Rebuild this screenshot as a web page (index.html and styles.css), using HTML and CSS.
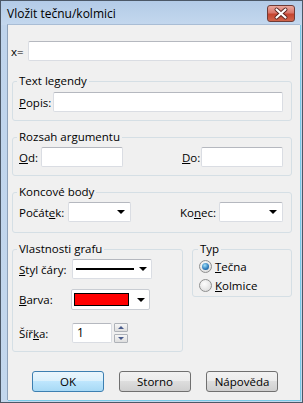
FILE: index.html
```html
<!DOCTYPE html>
<html>
	<head>
		<meta charset="UTF-8">
		<title>Vložit tečnu/kolmici</title>
		<link rel="stylesheet" href="styles.css">
	</head>
	<body>
		<div class="window">
			<div class="titlebar">
				<span class="title">Vložit tečnu/kolmici</span>
				<div class="close">
					<svg width="28" height="17" viewBox="0 0 28 17">
						<path d="M9.5 4.5 L18.5 12.5 M18.5 4.5 L9.5 12.5" stroke="#5a2620" stroke-width="4" stroke-linecap="round"/>
						<path d="M9.5 4.5 L18.5 12.5 M18.5 4.5 L9.5 12.5" stroke="#fff" stroke-width="2.2" stroke-linecap="round"/>
					</svg>
				</div>
			</div>
			<div class="client">
				<div class="xrow">
					<label class="xlab">x=</label>
					<div class="edit grow"></div>
				</div>

				<fieldset class="group">
					<legend>Text legendy</legend>
					<div class="row">
						<label class="l-popis"><u>P</u>opis:</label>
						<div class="edit grow"></div>
					</div>
				</fieldset>

				<fieldset class="group">
					<legend>Rozsah argumentu</legend>
					<div class="row split">
						<div class="pair">
							<label class="l-od"><u>O</u>d:</label>
							<div class="edit w82"></div>
						</div>
						<div class="pair">
							<label class="l-do"><u>D</u>o:</label>
							<div class="edit w82"></div>
						</div>
					</div>
				</fieldset>

				<fieldset class="group g-ends">
					<legend>Koncové body</legend>
					<div class="row split">
						<div class="pair">
							<label class="l-pocatek">Počát<u>e</u>k:</label>
							<div class="combo w63"><span class="arrow"></span></div>
						</div>
						<div class="pair">
							<label class="l-konec">Ko<u>n</u>ec:</label>
							<div class="combo w64"><span class="arrow"></span></div>
						</div>
					</div>
				</fieldset>

				<div class="bottom">
					<fieldset class="group g-graf">
						<legend>Vlastnosti grafu</legend>
						<div class="prop p-styl">
							<label class="plab"><u>S</u>tyl čáry:</label>
							<div class="combo c-styl"><span class="line"></span><span class="arrow"></span></div>
						</div>
						<div class="prop p-barva">
							<label class="plab"><u>B</u>arva:</label>
							<div class="combo c-barva"><span class="swatch"></span><span class="arrow"></span></div>
						</div>
						<div class="prop p-sirka">
							<label class="plab">Šíř<u>k</u>a:</label>
							<div class="edit w40 num">1</div>
							<div class="spin">
								<span class="sbtn"><span class="up"></span></span>
								<span class="sbtn"><span class="down"></span></span>
							</div>
						</div>
					</fieldset>

					<fieldset class="group g-typ">
						<legend>Typ</legend>
						<div class="radio">
							<span class="dot on"></span>
							<span><u>T</u>ečna</span>
						</div>
						<div class="radio">
							<span class="dot"></span>
							<span><u>K</u>olmice</span>
						</div>
					</fieldset>
				</div>

				<div class="buttons">
					<div class="btn default">OK</div>
					<div class="btn">Storno</div>
					<div class="btn">Nápověda</div>
				</div>
			</div>
		</div>
	</body>
</html>
```
FILE: styles.css
```css
*{
	margin: 0;
	padding: 0;
	box-sizing: border-box;
}
body{
	width: 303px;
	height: 403px;
	font-family: "Open Sans", "Noto Sans", sans-serif;
	font-size: 11.5px;
	color: #000;
	overflow: hidden;
}
.window{
	display: flex;
	flex-direction: column;
	height: 403px;
	border: 1px solid #4c5867;
	padding: 0 2px 2px 6px;
	background: linear-gradient(#b3cbe7, #c4d8ee 24px, #bfd4ec 24px, #c3d7ed);
}
.titlebar{
	display: flex;
	height: 23px;
	flex: none;
}
.title{
	margin-top: 5px;
	font-size: 12px;
	line-height: 16px;
	color: #000;
}
.close{
	width: 28px;
	height: 17px;
	margin: 4px 5px 0 auto;
	border: 1px solid #6f3b36;
	border-radius: 3px;
	background: linear-gradient(#eba89d, #d9766a 45%, #c5442f 55%, #d0654c);
	overflow: hidden;
}
.close svg{
	display: block;
	margin: -1px 0 0 -1px;
}
.client{
	flex: 1;
	background: #f0f0f0;
	border-left: 1px solid #8ea2ba;
	border-top: 1px solid #a9bdd5;
	box-shadow: 1px 1px 0 #78c8e6;
	padding: 16px 8px 0 4px;
}

/* text fields */
.edit, .combo{
	height: 20px;
	background: #fff;
	border: 1px solid #dadde3;
	border-top-color: #b5b8bf;
	border-radius: 2px;
}
.grow{
	flex: 1;
}
.w82{ width: 82px; }
.w63{ width: 63px; }
.w64{ width: 64px; }
.w40{ width: 40px; }

.xrow{
	display: flex;
	align-items: center;
	margin-left: -1px;
}
.xlab{
	width: 17px;
}

/* group boxes */
.group{
	border: 1px solid #d5dfe5;
	border-radius: 3px;
	padding: 2px 8px 8px 6px;
	margin-top: 8px;
	min-width: 0;
}
.group legend{
	line-height: 16px;
	padding: 0 2px;
	margin-left: -2px;
}
.xrow + .group{
	margin-top: 12px;
	padding-top: 3px;
}
.g-ends{
	padding-bottom: 10px;
}
.row{
	display: flex;
	align-items: center;
}
.split{
	justify-content: space-between;
}
.pair{
	display: flex;
	align-items: center;
}
.l-popis{ width: 34px; }
.l-od{ width: 22px; }
.l-do{ width: 19px; }
.l-pocatek{ width: 49px; }
.l-konec{ width: 39px; }

/* combo boxes */
.combo{
	display: flex;
	align-items: center;
	padding: 0 5px 0 3px;
}
.arrow{
	margin-left: auto;
	width: 0;
	height: 0;
	border-left: 4px solid transparent;
	border-right: 4px solid transparent;
	border-top: 4px solid #000;
}

/* graph properties */
.bottom{
	display: flex;
	align-items: flex-start;
	gap: 9px;
	margin-top: 8px;
}
.bottom .group{
	margin-top: 0;
}
.g-graf{
	width: 171px;
}
.prop{
	display: flex;
	align-items: center;
}
.plab{
	width: 53px;
}
.p-barva{
	margin-top: 10px;
}
.p-sirka{
	margin-top: 13px;
}
.c-styl{
	width: 80px;
	padding-right: 4px;
}
.line{
	width: 58px;
	height: 2px;
	background: #000;
}
.c-barva{
	width: 79px;
	height: 21px;
	margin-left: -1px;
	padding: 0 4px 0 2px;
	border-color: #c9cdd3;
}
.swatch{
	width: 55px;
	height: 13px;
	background: #f00;
	border: 1px solid #000;
}
.num{
	line-height: 18px;
	padding-left: 4px;
	font-size: 12px;
	color: #000;
}
.spin{
	display: flex;
	flex-direction: column;
	gap: 2px;
	margin-left: 2px;
}
.sbtn{
	display: flex;
	align-items: center;
	justify-content: center;
	width: 14px;
	height: 9px;
	border: 1px solid #aeb2b8;
	border-radius: 1px;
	background: linear-gradient(#f6f6f6, #dedede);
}
.up, .down{
	width: 0;
	height: 0;
	border-left: 3px solid transparent;
	border-right: 3px solid transparent;
}
.up{
	border-bottom: 3px solid #4a5c8c;
}
.down{
	border-top: 3px solid #4a5c8c;
}

/* type */
.g-typ{
	flex: 1;
	padding: 0 6px 1px 6px;
}
.g-typ legend{
	margin-left: -1px;
}
.radio{
	display: flex;
	align-items: center;
	gap: 3px;
	height: 19px;
}
.dot{
	display: flex;
	align-items: center;
	justify-content: center;
	width: 13px;
	height: 13px;
	border-radius: 50%;
	border: 1px solid #8e8f8f;
	background: radial-gradient(circle at 40% 35%, #fdfdfd, #d6d6d6);
}
.dot.on::before{
	content: "";
	width: 7px;
	height: 7px;
	border-radius: 50%;
	background: radial-gradient(circle at 40% 35%, #9fe0fb, #2b78b8 60%, #164d80);
}

/* buttons */
.buttons{
	display: flex;
	gap: 15px;
	margin-top: 19px;
	padding-left: 20px;
}
.btn{
	width: 72px;
	height: 21px;
	line-height: 19px;
	text-align: center;
	border: 1px solid #707070;
	border-radius: 3px;
	background: linear-gradient(#f2f2f2, #ebebeb 50%, #dddddd 50%, #cfcfcf);
}
.btn.default{
	border-color: #3c7fb1;
	background: linear-gradient(#eaf6fd, #d9f0fc 50%, #bee6fd 50%, #a7d9f5);
}
```
